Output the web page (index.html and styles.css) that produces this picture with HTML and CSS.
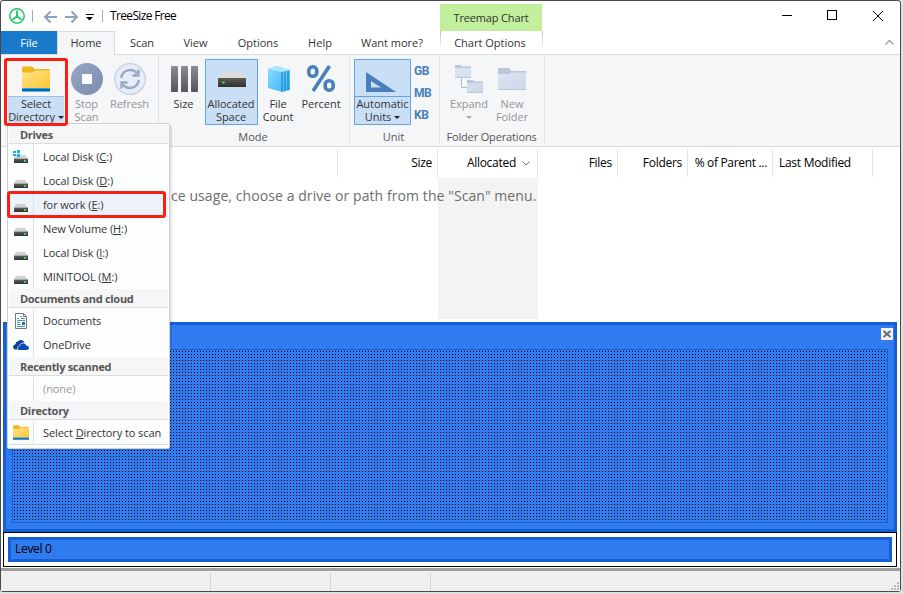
FILE: index.html
```html
<!DOCTYPE html>
<html lang="en">
<head>
  <meta charset="UTF-8">
  <title>TreeSize Free</title>
  <link rel="stylesheet" href="styles.css">
</head>
<body>
  <svg class="defs" width="0" height="0">
    <defs>
      <linearGradient id="gold" x1="0" y1="0" x2="1" y2="1"><stop offset="0" stop-color="#ffe38a"/><stop offset="1" stop-color="#fcc631"/></linearGradient>
      <linearGradient id="steel" x1="0" y1="0" x2="0" y2="1"><stop offset="0" stop-color="#8a8a90"/><stop offset="1" stop-color="#56575d"/></linearGradient>
      <linearGradient id="slate" x1="0" y1="0" x2="1" y2="1"><stop offset="0" stop-color="#98a6c0"/><stop offset="1" stop-color="#7a8cae"/></linearGradient>
      <linearGradient id="dark" x1="0" y1="0" x2="0" y2="1"><stop offset="0" stop-color="#5c5c5c"/><stop offset="1" stop-color="#303030"/></linearGradient>
      <linearGradient id="sky" x1="0" y1="0" x2="1" y2="1"><stop offset="0" stop-color="#8ddcff"/><stop offset="1" stop-color="#3bb2f5"/></linearGradient>
      <linearGradient id="pale" x1="0" y1="0" x2="1" y2="1"><stop offset="0" stop-color="#dfe7f3"/><stop offset="1" stop-color="#cbd7e9"/></linearGradient>
    </defs>
    <symbol id="drive" viewBox="0 0 16 10">
      <path d="M3 1h9l3 4H1z" fill="#d2d2d2"/>
      <path d="M1 5h14v4H1z" fill="url(#dark)"/>
      <path d="M1 4.5h14" stroke="#a8a8a8"/>
      <rect x="11" y="6" width="2" height="2" fill="#3ddc4a"/>
    </symbol>
    <symbol id="folder" viewBox="0 0 28 26">
      <path d="M0 2q0-1.500 1.500-1.500h8q1.200 0 1.800 1.200l.7 1.300h15.500v6H0z" fill="#f3b51d"/>
      <path d="M0 6.500h11l2-2h15V22H0z" fill="url(#gold)"/>
      <path d="M0 22h28v3.500H0z" fill="#0067b8"/>
      <path d="M0 22h28v1H0z" fill="#2aa7e8"/>
    </symbol>
  </svg>

  <div class="window">
    <header class="titlebar">
      <svg class="logo" width="16" height="16" viewBox="0 0 16 16" fill="none" stroke="#1fc46b">
        <circle cx="8" cy="8" r="7.200" stroke-width="1.500"/>
        <path d="M8 2.500v6M8 8.500l-4.500 3M8 8.500l4.500 3" stroke-width="1.800"/>
        <path d="M7 9.500l1-3 1 3z" fill="#1fc46b"/>
      </svg>
      <i class="bar"></i>
      <svg class="arrows" width="36" height="14" viewBox="0 0 36 14" fill="none" stroke="#8e9fbf" stroke-width="2">
        <path d="M14 7H2M7.500 1.500L2 7l5.500 5.500M22 7h12M28.500 1.500L34 7l-5.500 5.500"/>
      </svg>
      <svg class="quick" width="8" height="7" viewBox="0 0 8 7"><path d="M0 0h8v1H0zM0 3h7L3.500 6.500z"/></svg>
      <i class="bar"></i>
      <span class="app-name">TreeSize Free</span>
      <svg class="controls" width="102" height="12" viewBox="0 0 102 12" fill="none" stroke="#000">
        <path d="M0 5.500h10M91 1l10 10M101 1L91 11"/>
        <rect x="45.500" y=".5" width="9" height="9"/>
      </svg>
      <div class="context-tab">Treemap Chart</div>
    </header>

    <nav class="tabs">
      <a class="tab file">File</a>
      <a class="tab home">Home</a>
      <a class="tab scan">Scan</a>
      <a class="tab view">View</a>
      <a class="tab options">Options</a>
      <a class="tab help">Help</a>
      <a class="tab more">Want more?</a>
      <a class="tab chart">Chart Options</a>
      <svg class="collapse" width="9" height="5" viewBox="0 0 9 5" fill="none" stroke="#999" stroke-width="1.300"><path d="M.5 4.500l4-4 4 4"/></svg>
    </nav>

    <section class="ribbon">
      <div class="group group-scan">
        <div class="buttons">
          <div class="btn select">
            <div class="icon"><svg width="28" height="26"><use href="#folder"/></svg></div>
            <div class="caption"><span>Select</span><span>Directory <i class="caret"></i></span></div>
          </div>
          <div class="btn stop disabled">
            <div class="icon"><svg width="32" height="32" viewBox="0 0 32 32"><circle cx="16" cy="16" r="16" fill="url(#slate)"/><rect x="11" y="11" width="10" height="10" rx="1" fill="#f7faff"/></svg></div>
            <div class="caption"><span>Stop</span><span>Scan</span></div>
          </div>
          <div class="btn refresh disabled">
            <div class="icon"><svg width="32" height="32" viewBox="0 0 32 32" fill="none"><circle cx="16" cy="16" r="15.300" fill="#e7edf6" stroke="#c3cfe2" stroke-width="1.300"/><path d="M7.200 15a9 9 0 0 1 16-4.500M24.800 17a9 9 0 0 1-16 4.500" stroke="#98a8c4" stroke-width="2.300"/><path d="M24.500 6.500v6h-6M7.500 25.500v-6h6" stroke="#98a8c4" stroke-width="2.300"/></svg></div>
            <div class="caption"><span>Refresh</span></div>
          </div>
        </div>
      </div>

      <div class="group group-mode">
        <div class="buttons">
          <div class="btn size">
            <div class="icon"><svg width="28" height="26" viewBox="0 0 28 26" fill="url(#steel)"><rect x="1" width="7" height="26" rx="1"/><rect x="11" width="7" height="26" rx="1"/><rect x="21" width="7" height="26" rx="1"/></svg></div>
            <div class="caption"><span>Size</span></div>
          </div>
          <div class="btn allocated active">
            <div class="icon"><svg width="28" height="16" viewBox="0 0 28 16"><path d="M5 0h18l5 7H0z" fill="#dcdcdc"/><path d="M0 6h28v9H0z" fill="url(#dark)"/><circle cx="5.500" cy="10.500" r="1.200" fill="#27ef3e"/></svg></div>
            <div class="caption"><span>Allocated</span><span>Space</span></div>
          </div>
          <div class="btn count">
            <div class="icon"><svg width="22" height="26" viewBox="0 0 22 26"><path d="M0 3l8-3 14 4v20l-8 2L0 22z" fill="url(#sky)"/><path d="M0 3l8-3 14 4-8 2z" fill="#a9e6ff"/><path d="M14 6v19.500M17 5.500v19M20 5v19" stroke="#188bd1" stroke-width="1.200"/></svg></div>
            <div class="caption"><span>File</span><span>Count</span></div>
          </div>
          <div class="btn percent">
            <div class="icon"><svg width="28" height="27" viewBox="0 0 28 27" fill="none" stroke="#4a80ba" stroke-width="3.600"><rect x="1.800" y="1.800" width="8" height="9.500" rx="3.800"/><rect x="18.200" y="15.700" width="8" height="9.500" rx="3.800"/><path d="M22.500 1L6 26"/></svg></div>
            <div class="caption"><span>Percent</span></div>
          </div>
        </div>
        <div class="group-name">Mode</div>
      </div>

      <div class="group group-unit">
        <div class="buttons">
          <div class="btn automatic active">
            <div class="icon"><svg width="30" height="20" viewBox="0 0 30 20"><path d="M0 0l30 20H0zM5 9v6.500h10z" fill="#4a80ba" fill-rule="evenodd"/></svg></div>
            <div class="caption"><span>Automatic</span><span>Units <i class="caret"></i></span></div>
          </div>
          <div class="units"><b>GB</b><b>MB</b><b>KB</b></div>
        </div>
        <div class="group-name">Unit</div>
      </div>

      <div class="group group-folder">
        <div class="buttons">
          <div class="btn expand disabled">
            <div class="icon"><svg width="28" height="28" viewBox="0 0 28 28"><path d="M6.500 12v10.500H12" fill="none" stroke="#a9b7d0"/><path d="M0 0h6l1 1.500h9V13H0zM12 15h6l1 1.500h9V28H12z" fill="url(#pale)"/><path d="M0 0h6l1 1.500h9V3H0zM12 15h6l1 1.500h9V18H12z" fill="#bac7dc"/><path d="M0 12.500h16M12 27.500h16" stroke="#bac7dc"/></svg></div>
            <div class="caption"><span>Expand</span><span><i class="caret"></i></span></div>
          </div>
          <div class="btn new disabled">
            <div class="icon"><svg width="28" height="22" viewBox="0 0 28 22"><path d="M0 0h11l2 3h15v19H0z" fill="url(#pale)"/><path d="M0 0h11l2 3h15v1.500H13L11 6H0z" fill="#bac7dc"/><path d="M0 21.500h28" stroke="#bac7dc"/></svg></div>
            <div class="caption"><span>New</span><span>Folder</span></div>
          </div>
        </div>
        <div class="group-name">Folder Operations</div>
      </div>
    </section>

    <section class="list">
      <div class="list-head">
        <div class="col c-size">Size</div>
        <div class="col c-alloc">Allocated <svg width="8" height="5" viewBox="0 0 8 5" fill="none" stroke="#777"><path d="M.5.5L4 4 7.500.5"/></svg></div>
        <div class="col c-files">Files</div>
        <div class="col c-folders">Folders</div>
        <div class="col c-parent">% of Parent ...</div>
        <div class="col c-modified">Last Modified</div>
      </div>
      <div class="list-body">
        <p class="hint">ce usage, choose a drive or path from the "Scan" menu.</p>
      </div>
    </section>

    <section class="treemap">
      <div class="treemap-title"><svg width="12" height="12" viewBox="0 0 12 12"><path d="M0 0h12v12H0z" fill="#f0f0f0"/><path d="M2.500 3l7 6M9.500 3l-7 6" stroke="#666" stroke-width="1.800"/></svg></div>
      <div class="dots"></div>
    </section>
    <section class="legend"><div class="level">Level 0</div></section>

    <footer class="status">
      <i></i><i></i><i></i>
      <svg width="9" height="9" viewBox="0 0 9 9" fill="#b8b8b8"><path d="M6 0h2v2H6zM3 3h2v2H3zM6 3h2v2H6zM0 6h2v2H0zM3 6h2v2H3zM6 6h2v2H6z"/></svg>
    </footer>

    <div class="menu">
      <h4>Drives</h4>
      <a><i><svg width="16" height="14" viewBox="0 0 16 14"><use href="#drive" y="4" width="16" height="10"/><path d="M0 1h3v2H0zM4 0h3v3H4zM0 4h3v2H0zM4 4h3v3H4z" fill="#12b5f0"/></svg></i><span>Local Disk (<u>C</u>:)</span></a>
      <a><i><svg class="disk" width="16" height="10"><use href="#drive"/></svg></i><span>Local Disk (<u>D</u>:)</span></a>
      <a class="hover"><i><svg class="disk" width="16" height="10"><use href="#drive"/></svg></i><span>for work (<u>E</u>:)</span></a>
      <a><i><svg class="disk" width="16" height="10"><use href="#drive"/></svg></i><span>New Volume (<u>H</u>:)</span></a>
      <a><i><svg class="disk" width="16" height="10"><use href="#drive"/></svg></i><span>Local Disk (<u>I</u>:)</span></a>
      <a><i><svg class="disk" width="16" height="10"><use href="#drive"/></svg></i><span>MINITOOL (<u>M</u>:)</span></a>
      <h4>Documents and cloud</h4>
      <a><i><svg width="12" height="16" viewBox="0 0 12 16" fill="none"><path d="M.5.500h8l3 3v12H.500z" fill="#fff" stroke="#777"/><path d="M8.500.500v3h3" stroke="#777"/><path d="M2 5.500h2M5 3.500h2M6 5.500h4M2 7.500h8M2 9.500h3M2 11.500h4M2 13.500h8" stroke="#3c94c8"/><path d="M7 9h3v3H7z" fill="#2c6f9c"/></svg></i><span>Documents</span></a>
      <a><i><svg width="16" height="10" viewBox="0 0 16 10"><path d="M2.500 9.500Q0 9.500 0 7.200 0 5 2.300 4.600 2.600 1.800 5.200 1.300 7-.600 9.200.300q1.600.500 2.200 2.200-3.600-.600-5 2.700-2.600.800-2.200 4.300z" fill="#0b3f9b"/><path d="M6 10q-1.500-.400-1.400-2 .2-1.800 2.200-2.200Q7.600 3 10.400 3.200q2.200.200 2.900 2.200 2.500.200 2.700 2.400Q15.900 10 14 10z" fill="#0b4db5"/></svg></i><span>OneDrive</span></a>
      <h4>Recently scanned</h4>
      <a class="none"><i></i><span>(none)</span></a>
      <h4>Directory</h4>
      <a><i><svg width="16" height="15" viewBox="0 0 28 26" preserveAspectRatio="none"><use href="#folder" width="28" height="26"/></svg></i><span>Select <u>D</u>irectory to scan</span></a>
    </div>

    <div class="mark mark-select"></div>
    <div class="mark mark-drive"></div>
  </div>
</body>
</html>
```
FILE: styles.css
```css
:root {
  --blue: #307bf0;
  --blue-dark: #155fd5;
  --line: #d9dbdf;
  --ribbon: #f4f6f8;
  --active: #c9dff6;
  --active-line: #66a2e0;
}

* {
  margin: 0;
  padding: 0;
  box-sizing: border-box;
}

body {
  width: 903px;
  height: 594px;
  overflow: hidden;
  background: #e0e0e0;
  font-family: "Open Sans", "Noto Sans", sans-serif;
  font-size: 11px;
  color: #333;
}

svg {
  display: block;
  flex: none;
}

.defs {
  position: absolute;
}

.window {
  position: relative;
  width: 901px;
  height: 592px;
  border: 1px solid #4b4a4f;
  border-radius: 3px;
  background: #fff;
  display: flex;
  flex-direction: column;
  white-space: nowrap;
}

/* title bar */
.titlebar {
  position: relative;
  height: 30px;
  display: flex;
  align-items: center;
  padding-left: 8px;
}

.bar {
  width: 1px;
  height: 12px;
  background: #aaa;
}

.logo { margin-right: 7px; }
.arrows { margin: 1px 7px 0 10px; }
.quick { margin: 3px 8px 0 0; }

.app-name {
  margin: -1px 0 0 7px;
  font-size: 12px;
  letter-spacing: -0.65px;
  color: #000;
}

.controls {
  margin: 0 16px 0 auto;
}

.context-tab {
  position: absolute;
  left: 439px;
  top: 3px;
  width: 102px;
  height: 27px;
  line-height: 28px;
  text-align: center;
  letter-spacing: -0.15px;
  background: #c1ef9b;
}

/* tabs */
.tabs {
  height: 24px;
  display: flex;
  border-bottom: 1px solid var(--line);
}

.tab {
  height: 23px;
  line-height: 24px;
  text-align: center;
}

.file { width: 56px; background: #1979ca; color: #fff; }
.home {
  width: 58px;
  height: 24px;
  background: var(--ribbon);
  border: solid var(--line);
  border-width: 1px 1px 0;
  line-height: 22px;
}
.scan { width: 54px; }
.view { width: 53px; }
.options { width: 72px; }
.help { width: 52px; }
.more { width: 92px; }
.chart {
  width: 103px;
  margin-left: 2px;
  padding-right: 3px;
  border: solid transparent;
  border-width: 0 1px;
  border-image: linear-gradient(#bbb, #fff 80%) 1;
}

.collapse {
  margin: 9px 6px 0 auto;
}

/* ribbon */
.ribbon {
  height: 92px;
  display: flex;
  background: var(--ribbon);
  border-bottom: 1px solid var(--line);
}

.group {
  display: flex;
  flex-direction: column;
  position: relative;
  padding-top: 4px;
  border-right: 1px solid #dfe1e5;
  height: 86px;
  margin-top: 2px;
}

.group-scan { width: 158px; padding-left: 6px; }
.group-mode { width: 191px; padding-left: 4px; }
.group-unit { width: 90px; padding-left: 4px; }
.group-folder { width: 105px; padding-left: 3px; }
.group-folder .group-name { letter-spacing: -0.15px; margin-left: -4px; }

.buttons {
  display: flex;
  height: 66px;
  margin-top: -2px;
}

.btn {
  height: 66px;
  border: 1px solid transparent;
}

.icon {
  height: 37px;
  display: flex;
  align-items: center;
  justify-content: center;
}

.caption {
  display: flex;
  flex-direction: column;
  align-items: center;
  letter-spacing: -0.05px;
}

.caption span {
  height: 13px;
  line-height: 13px;
}

.btn:not(.select) .caption {
  margin-left: -1px;
}

.select { width: 58px; }
.select .icon { padding-top: 1px; }
.select .caption {
  height: 28px;
  margin-top: -1px;
  background: var(--active);
  border-top: 1px solid #9bc2ea;
}
.stop { width: 44px; }
.refresh { width: 42px; }
.size { width: 42px; }
.allocated { width: 53px; }
.allocated .icon { padding-top: 3px; }
.count { width: 41px; }
.percent { width: 45px; }
.percent .icon { padding-right: 1px; }
.automatic { width: 57px; }
.automatic .icon { padding-top: 6px; padding-right: 3px; }
.btn.automatic .caption { border-top: 1px solid var(--active-line); margin: -1px 0 0; }
.expand { width: 53px; }
.expand .icon { padding-right: 2px; }
.new { width: 33px; }
.new .icon { padding-right: 2px; }

.active {
  background: var(--active);
  border-color: var(--active-line);
}

.disabled {
  color: #939498;
}

.caret {
  display: inline-block;
  border: solid transparent;
  border-width: 3px 3px 0;
  border-top-color: #222;
  vertical-align: 2px;
}

.disabled .caret {
  border-top-color: #aaa;
}

.units {
  display: flex;
  flex-direction: column;
  padding-left: 3px;
  color: #4a80ba;
}

.units b {
  height: 22px;
  line-height: 25px;
  font-family: Roboto, sans-serif;
  font-size: 12px;
  font-weight: 700;
  letter-spacing: -0.5px;
}

.group-name {
  text-align: center;
  line-height: 15px;
  margin: 4px 0 0 -6px;
  color: #555;
}

/* file list */
.list {
  height: 175px;
}

.list-head {
  display: flex;
  height: 31px;
  padding-top: 2px;
  color: #000;
  font-size: 12px;
  letter-spacing: -0.28px;
}

.col {
  height: 28px;
  line-height: 28px;
  text-align: right;
  padding-right: 5px;
  border-right: 1px solid #e4e4e4;
}

.c-size { margin-left: 336px; width: 101px; border-left: 1px solid #e4e4e4; }
.c-alloc {
  width: 100px;
  display: flex;
  align-items: center;
  justify-content: flex-end;
  gap: 6px;
  padding-right: 7px;
}
.c-files { width: 80px; }
.c-folders { width: 70px; }
.c-parent { width: 85px; letter-spacing: -0.32px; }
.c-modified { width: 100px; text-align: left; padding-left: 6px; }

.list-body {
  height: 141px;
  background: linear-gradient(#f3f3f3, #f3f3f3) 437px 0 / 100px 100% no-repeat;
}

.hint {
  margin-left: 170px;
  padding-top: 8px;
  font-size: 14px;
  line-height: 20px;
  letter-spacing: 0.08px;
  color: #6d6d6d;
}

/* treemap */
.treemap {
  width: 894px;
  height: 210px;
  margin-left: 2px;
  padding: 0 6px 6px;
  border: 3px solid var(--blue-dark);
  background: var(--blue);
}

.treemap-title {
  height: 24px;
  display: flex;
  justify-content: flex-end;
  padding-top: 3px;
  margin-right: -6px;
}

.treemap-title svg { margin-right: 1px; }

.dots {
  height: 174px;
  border: 1px solid var(--blue-dark);
  background: linear-gradient(90deg, transparent 1px, var(--blue) 1px) 1px 1px / 3px 3px,
    linear-gradient(#000 1px, var(--blue) 1px) 1px 1px / 3px 3px;
}

.legend {
  width: 894px;
  height: 35px;
  margin-left: 2px;
  padding: 4px;
  border: 1px solid #000;
}

.level {
  height: 25px;
  border: 3px solid var(--blue-dark);
  background: var(--blue);
  color: #000;
  font-size: 12px;
  line-height: 18px;
  padding-left: 4px;
  letter-spacing: -0.3px;
}

/* status bar */
.status {
  position: relative;
  display: flex;
  height: 23px;
  margin-top: 1px;
  padding-top: 2px;
  background: #f0f0f0;
  border-top: 3px solid #a0a0a0;
}

.status i {
  width: 120px;
  border-right: 1px solid #d7d7d7;
}

.status i:first-child { width: 210px; }
.status i:nth-child(3) { width: 100px; }

.status svg {
  margin: 9px 0 0 auto;
}

/* drop-down */
.menu {
  position: absolute;
  left: 6px;
  top: 122px;
  width: 163px;
  height: 326px;
  padding: 1px 1px 0;
  border: 1px solid #cfd1d4;
  border-radius: 2px;
  background: #fcfdfe;
  box-shadow: 2px 2px 1px rgba(0, 0, 0, 0.1);
}

.menu h4 {
  height: 19px;
  margin-bottom: 1px;
  padding-left: 11px;
  font-size: 11px;
  line-height: 19px;
  letter-spacing: -0.3px;
  color: #555;
  background: #f5f6f7;
  border-bottom: 1px solid #dadcdf;
}

.menu a {
  display: flex;
  height: 24px;
  line-height: 24px;
  letter-spacing: -0.08px;
}

.menu a i {
  width: 25px;
  padding-right: 1px;
  display: flex;
  align-items: center;
  justify-content: center;
  border-right: 1px solid #dfe1e3;
}

.menu a span { padding-left: 9px; }
.menu .disk { margin-top: 5px; }
.menu .hover { background: #edf3fb; }
.menu .none { color: #999; }
.menu a:last-child { border-bottom: 1px solid #dadcdf; }

/* callouts */
.mark {
  position: absolute;
  border: 3px solid #fa1e14;
  border-radius: 3px;
}

.mark-select {
  left: 3px;
  top: 57px;
  width: 64px;
  height: 68px;
}

.mark-drive {
  left: 6px;
  top: 190px;
  width: 159px;
  height: 27px;
}
```
